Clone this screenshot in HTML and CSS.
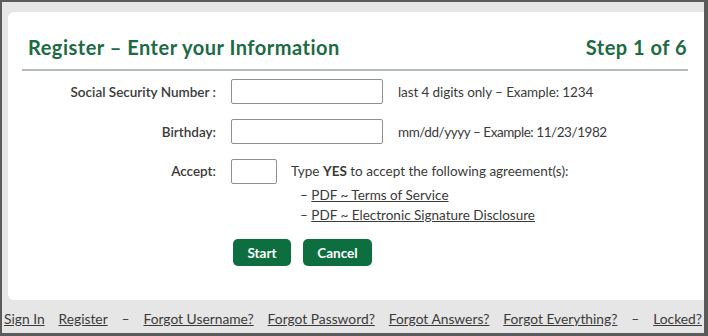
FILE: index.html
```html
<!DOCTYPE html>
<html lang="en">
<head>
<meta charset="utf-8">
<title>Register – Enter your Information</title>
<link rel="stylesheet" href="styles.css">
</head>
<body>
<div class="frame">
  <div class="card">
    <div class="head">
      <h1 class="title">Register – Enter your Information</h1>
      <div class="step">Step 1 of 6</div>
    </div>
    <form class="form">
      <label class="label" for="ssn">Social Security Number :</label>
      <div class="field">
        <input class="input wide" id="ssn" type="text">
        <span class="hint">last 4 digits only – Example: 1234</span>
      </div>
      <label class="label" for="bday">Birthday:</label>
      <div class="field">
        <input class="input wide" id="bday" type="text">
        <span class="hint date">mm/dd/yyyy – Example: 11/23/1982</span>
      </div>
      <label class="label top" for="accept">Accept:</label>
      <div class="field top">
        <input class="input narrow" id="accept" type="text">
        <div class="agree">
          <div class="agree-text">Type <b>YES</b> to accept the following agreement(s):</div>
          <ul class="docs">
            <li>– <a href="#">PDF ~ Terms of Service</a></li>
            <li>– <a href="#">PDF ~ Electronic Signature Disclosure</a></li>
          </ul>
        </div>
      </div>
      <div class="spacer"></div>
      <div class="buttons">
        <button type="button" class="btn start">Start</button>
        <button type="button" class="btn cancel">Cancel</button>
      </div>
    </form>
  </div>
  <nav class="footer">
    <a href="#">Sign In</a>
    <a href="#">Register</a>
    <span class="dash">–</span>
    <a href="#">Forgot Username?</a>
    <a href="#">Forgot Password?</a>
    <a href="#">Forgot Answers?</a>
    <a href="#">Forgot Everything?</a>
    <span class="dash">–</span>
    <a href="#">Locked?</a>
  </nav>
</div>
</body>
</html>
```

FILE: styles.css
```css
html, body {
  margin: 0;
  padding: 0;
}
body {
  font-family: Lato, "Open Sans", "Liberation Sans", sans-serif;
  color: #333;
}
.frame {
  box-sizing: border-box;
  width: 708px;
  height: 336px;
  background: #e6e6e6;
  border-style: solid;
  border-color: #5b5b5b;
  border-width: 2px 4px 3px 2px;
  display: flex;
  flex-direction: column;
}
.card {
  box-sizing: border-box;
  margin: 10px 0 0 6px;
  height: 288px;
  background: #fff;
  border-radius: 6px 0 0 6px;
}
.head {
  display: flex;
  justify-content: space-between;
  align-items: flex-end;
  margin: 0 16px 0 14px;
  padding: 23px 1px 10px 6px;
  border-bottom: 2px solid #b5bdb9;
}
.title, .step {
  margin: 0;
  font-size: 20px;
  letter-spacing: 0.5px;
  font-weight: 700;
  color: #1b6b44;
  line-height: 24px;
}
.form {
  display: grid;
  grid-template-columns: 208px 1fr;
  column-gap: 15px;
  row-gap: 15px;
  margin-top: 8px;
}
.label {
  font-size: 13.5px;
  font-weight: 600;
  color: #3a3a3a;
  text-align: right;
  align-self: center;
}
.label.top {
  align-self: start;
  padding-top: 4px;
}
.field {
  display: flex;
  align-items: center;
  gap: 15px;
}
.field.top {
  align-items: flex-start;
  gap: 14px;
}
.input {
  box-sizing: border-box;
  height: 25px;
  margin: 0;
  border: 1px solid #8f8f8f;
  border-radius: 2px;
  background: #fff;
  font: inherit;
}
.wide { width: 152px; }
.narrow { width: 46px; }
.hint {
  font-size: 13.5px;
  letter-spacing: -0.1px;
  color: #3a3a3a;
}
.hint.date {
  letter-spacing: -0.45px;
}
.agree {
  font-size: 13.5px;
  color: #3a3a3a;
  padding-top: 3px;
}
.agree-text { line-height: 18px; }
.agree b { font-weight: 700; }
.docs {
  list-style: none;
  margin: 5px 0 0 9px;
  padding: 0;
}
.docs li { line-height: 20px; }
.docs a, .footer a {
  color: #3a3a3a;
  text-decoration: underline;
}
.spacer { height: 0; }
.buttons {
  display: flex;
  gap: 12px;
  padding-left: 2px;
  margin-top: -1px;
}
.btn {
  height: 27px;
  border: none;
  border-radius: 5px;
  background: #0d6e3f;
  color: #fff;
  font-family: inherit;
  font-size: 13.5px;
  font-weight: 700;
  padding: 0;
}
.start { width: 58px; }
.cancel { width: 69px; }
.footer {
  display: flex;
  justify-content: space-between;
  align-items: center;
  padding: 4px 2px 0 2px;
  flex: 1;
  font-size: 13.8px;
  color: #3a3a3a;
}
```
